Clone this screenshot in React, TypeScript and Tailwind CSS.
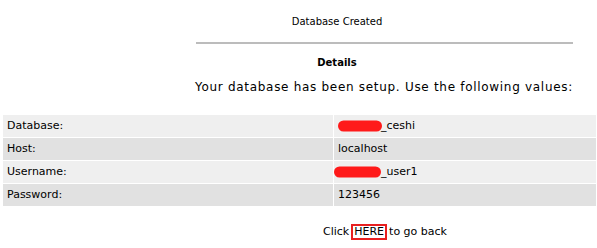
const rows = [
  { label: "Database:", value: "_ceshi", blob: "w-[44px] left-0", pad: "w-[43px]", bg: "bg-[#efefef]" },
  { label: "Host:", value: "localhost", blob: "", pad: "", bg: "bg-[#e1e1e1]" },
  { label: "Username:", value: "_user1", blob: "w-[47px] left-[-4px]", pad: "w-[43px]", bg: "bg-[#efefef]" },
  { label: "Password:", value: "123456", blob: "", pad: "", bg: "bg-[#e1e1e1]" },
];

export default function App() {
  return (
    <div className="w-[597px] h-[248px] bg-white text-[11px] text-black font-['DejaVu_Sans',Verdana,sans-serif] overflow-hidden">
      <div className="ml-[101px] w-[472px] pt-[15px] text-center text-[10px] leading-[14px]">Database Created</div>
      <div className="ml-[196px] w-[377px] h-[2px] mt-[13px] bg-[#bcbcbc]" />
      <div className="ml-[101px] w-[472px] mt-[12px] text-center text-[10px] font-bold leading-[14px]">Details</div>
      <div className="ml-[184px] w-[400px] mt-[9px] text-center text-[12px] tracking-[0.7px] leading-[16px]">
        Your database has been setup. Use the following values:
      </div>

      <div className="ml-[3px] mr-[1px] mt-[20px] flex flex-col gap-[1px]">
        {rows.map((r) => (
          <div key={r.label} className="flex gap-[1px] h-[22px]">
            <div className={`w-[330px] ${r.bg} pl-[4px] flex items-center`}>{r.label}</div>
            <div className={`flex-1 ${r.bg} pl-[4px] flex items-center`}>
              {r.blob ? (
                <span className="relative flex items-center">
                  <span className={`${r.pad} inline-block`} />
                  <span>{r.value}</span>
                  <span
                    className={`absolute top-1/2 -translate-y-1/2 ${r.blob} h-[11px] rounded-full bg-[#ff1a1a]`}
                  />
                </span>
              ) : (
                r.value
              )}
            </div>
          </div>
        ))}
      </div>

      <div className="mt-[18px] ml-[190px] w-[390px] flex justify-center items-center leading-[14px]">
        <span>Click</span>
        <span className="mx-[2px] px-[1px] border-2 border-[#e82020] leading-[12px]">HERE</span>
        <span>to go back</span>
      </div>
    </div>
  );
}
